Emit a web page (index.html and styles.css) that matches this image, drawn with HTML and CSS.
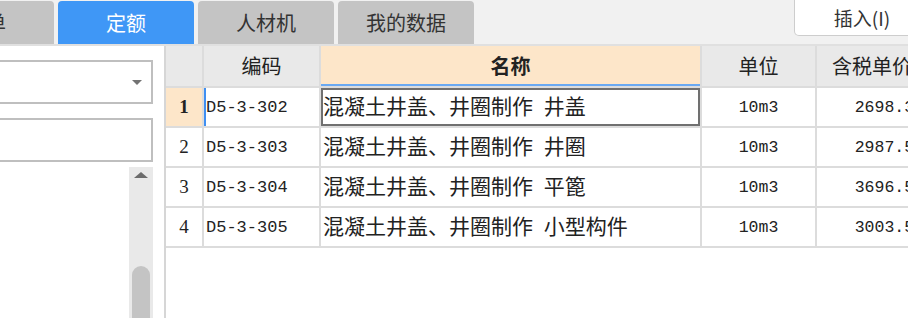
FILE: index.html
```html
<!DOCTYPE html>
<html lang="zh-CN">
<head>
  <meta charset="UTF-8" />
  <title>定额</title>
  <link rel="stylesheet" href="styles.css">
</head>
<body>

<!-- Tabs -->
<div class="tabbar">
  <div class="tab tab-cut">清单</div>
  <div class="tab active">定额</div>
  <div class="tab">人材机</div>
  <div class="tab">我的数据</div>
  <button class="insert-btn">插入(I)</button>
</div>

<div class="main">
  <!-- Left filter panel -->
  <aside class="side">
    <div class="select"><span class="caret"></span></div>
    <div class="search"></div>
    <div class="scrollbar">
      <span class="arrow-up"></span>
      <span class="thumb"></span>
    </div>
  </aside>

  <!-- Quota table -->
  <section class="grid-wrap">
    <div class="grid">
      <div class="cell head"></div>
      <div class="cell head">编码</div>
      <div class="cell head name-head">名称</div>
      <div class="cell head">单位</div>
      <div class="cell head">含税单价</div>

      <div class="cell num current">1</div>
      <div class="cell code marked">D5-3-302</div>
      <div class="cell name selected">混凝土井盖、井圈制作 井盖</div>
      <div class="cell unit">10m3</div>
      <div class="cell price">2698.31</div>

      <div class="cell num">2</div>
      <div class="cell code">D5-3-303</div>
      <div class="cell name">混凝土井盖、井圈制作 井圈</div>
      <div class="cell unit">10m3</div>
      <div class="cell price">2987.52</div>

      <div class="cell num">3</div>
      <div class="cell code">D5-3-304</div>
      <div class="cell name">混凝土井盖、井圈制作 平篦</div>
      <div class="cell unit">10m3</div>
      <div class="cell price">3696.55</div>

      <div class="cell num">4</div>
      <div class="cell code">D5-3-305</div>
      <div class="cell name">混凝土井盖、井圈制作 小型构件</div>
      <div class="cell unit">10m3</div>
      <div class="cell price">3003.57</div>
    </div>
  </section>
</div>

</body>
</html>
```

FILE: styles.css
```css
html, body {
  margin: 0; padding: 0;
  overflow: hidden;
  height: 100%;
  background: #f1f1f1;
  font-family: "Noto Sans CJK SC", "Liberation Sans", sans-serif;
  color: #222;
}

/* Tabs */
.tabbar {
  display: flex;
  align-items: flex-start;
  gap: 4px;
  height: 43px;
  padding-top: 1px;
  border-bottom: 2px solid #e0e0e0;
}

.tab {
  flex: none;
  width: 136px; height: 43px;
  display: flex;
  justify-content: center;
  align-items: center;
  background: #c4c4c4;
  border-radius: 4px 4px 0 0;
  font-size: 20px;
  color: #333;
}

.tab-cut { margin-left: -82px; }
.tab.active { background: #3f97f6; color: #fff; }

.insert-btn {
  flex: none;
  margin-left: auto;
  margin-right: -22px;
  margin-top: -1px;
  width: 136px; height: 36px;
  background: #fff;
  border: 1px solid #cdcdcd;
  border-top: none;
  border-radius: 0 0 0 5px;
  font-family: "Noto Sans CJK SC", sans-serif;
  font-size: 19px;
  color: #333;
  padding: 0;
}

/* Main area */
.main {
  display: flex;
  height: calc(100% - 46px);
  background: #fff;
}

.side {
  flex: none;
  box-sizing: border-box;
  width: 166px;
  padding: 14px 11px 0 0;
  border-right: 2px solid #d6d6d6;
  display: flex;
  flex-direction: column;
  gap: 14px;
}

.select, .search {
  height: 44px;
  margin-left: -10px;
  box-sizing: border-box;
  border: 2px solid #bfbfbf;
  background: #fff;
}

.select {
  display: flex;
  justify-content: flex-end;
  align-items: center;
  padding-right: 9px;
}

.caret {
  width: 0; height: 0;
  border-left: 5px solid transparent;
  border-right: 5px solid transparent;
  border-top: 5px solid #737373;
}

.scrollbar {
  flex: 1;
  align-self: flex-end;
  width: 24px;
  margin-top: -9px;
  background: #e9e9e9;
  display: flex;
  flex-direction: column;
  align-items: center;
  overflow: hidden;
}

.arrow-up {
  flex: none;
  margin-top: 5px;
  width: 0; height: 0;
  border-left: 7px solid transparent;
  border-right: 7px solid transparent;
  border-bottom: 6px solid #6c6c6c;
}

.thumb {
  flex: none;
  margin-top: 88px;
  width: 18px; height: 90px;
  border-radius: 9px;
  background: #c4c4c4;
}

/* Table */
.grid-wrap {
  flex: 1;
  overflow: hidden;
}

.grid {
  display: grid;
  width: max-content;
  grid-template-columns: 36px 115px 379px 113px 110px;
  grid-template-rows: 40px;
  grid-auto-rows: 38px;
  gap: 2px;
  padding-bottom: 2px;
  background: #dcdcdc;
}

.cell {
  display: flex;
  align-items: center;
  background: #fff;
  white-space: nowrap;
  overflow: hidden;
}

.head {
  justify-content: center;
  background: #e9e9e9;
  font-size: 20px;
  padding-bottom: 2px;
}

.name-head {
  background: #fde6c9;
  font-weight: bold;
  box-shadow: inset 0 -2px 0 #6aa9f2;
}

.num {
  justify-content: center;
  font-family: "Liberation Serif", serif;
  font-size: 19px;
}

.num.current { background: #fde6c9; font-weight: bold; }

.code {
  padding-left: 2px;
  font-family: "Liberation Mono", monospace;
  font-size: 17px;
}

.code.marked { box-shadow: inset 2px 0 0 #3f8ff2; }

.name {
  padding: 0 0 4px 2px;
  font-size: 21px;
  word-spacing: 6px;
}

.name.selected { box-shadow: inset 0 0 0 2px #707070; }

.unit {
  justify-content: center;
  font-family: "Liberation Mono", monospace;
  font-size: 16.5px;
}

.price {
  justify-content: flex-end;
  padding-right: 3px;
  font-family: "Liberation Mono", monospace;
  font-size: 16.5px;
}
```
